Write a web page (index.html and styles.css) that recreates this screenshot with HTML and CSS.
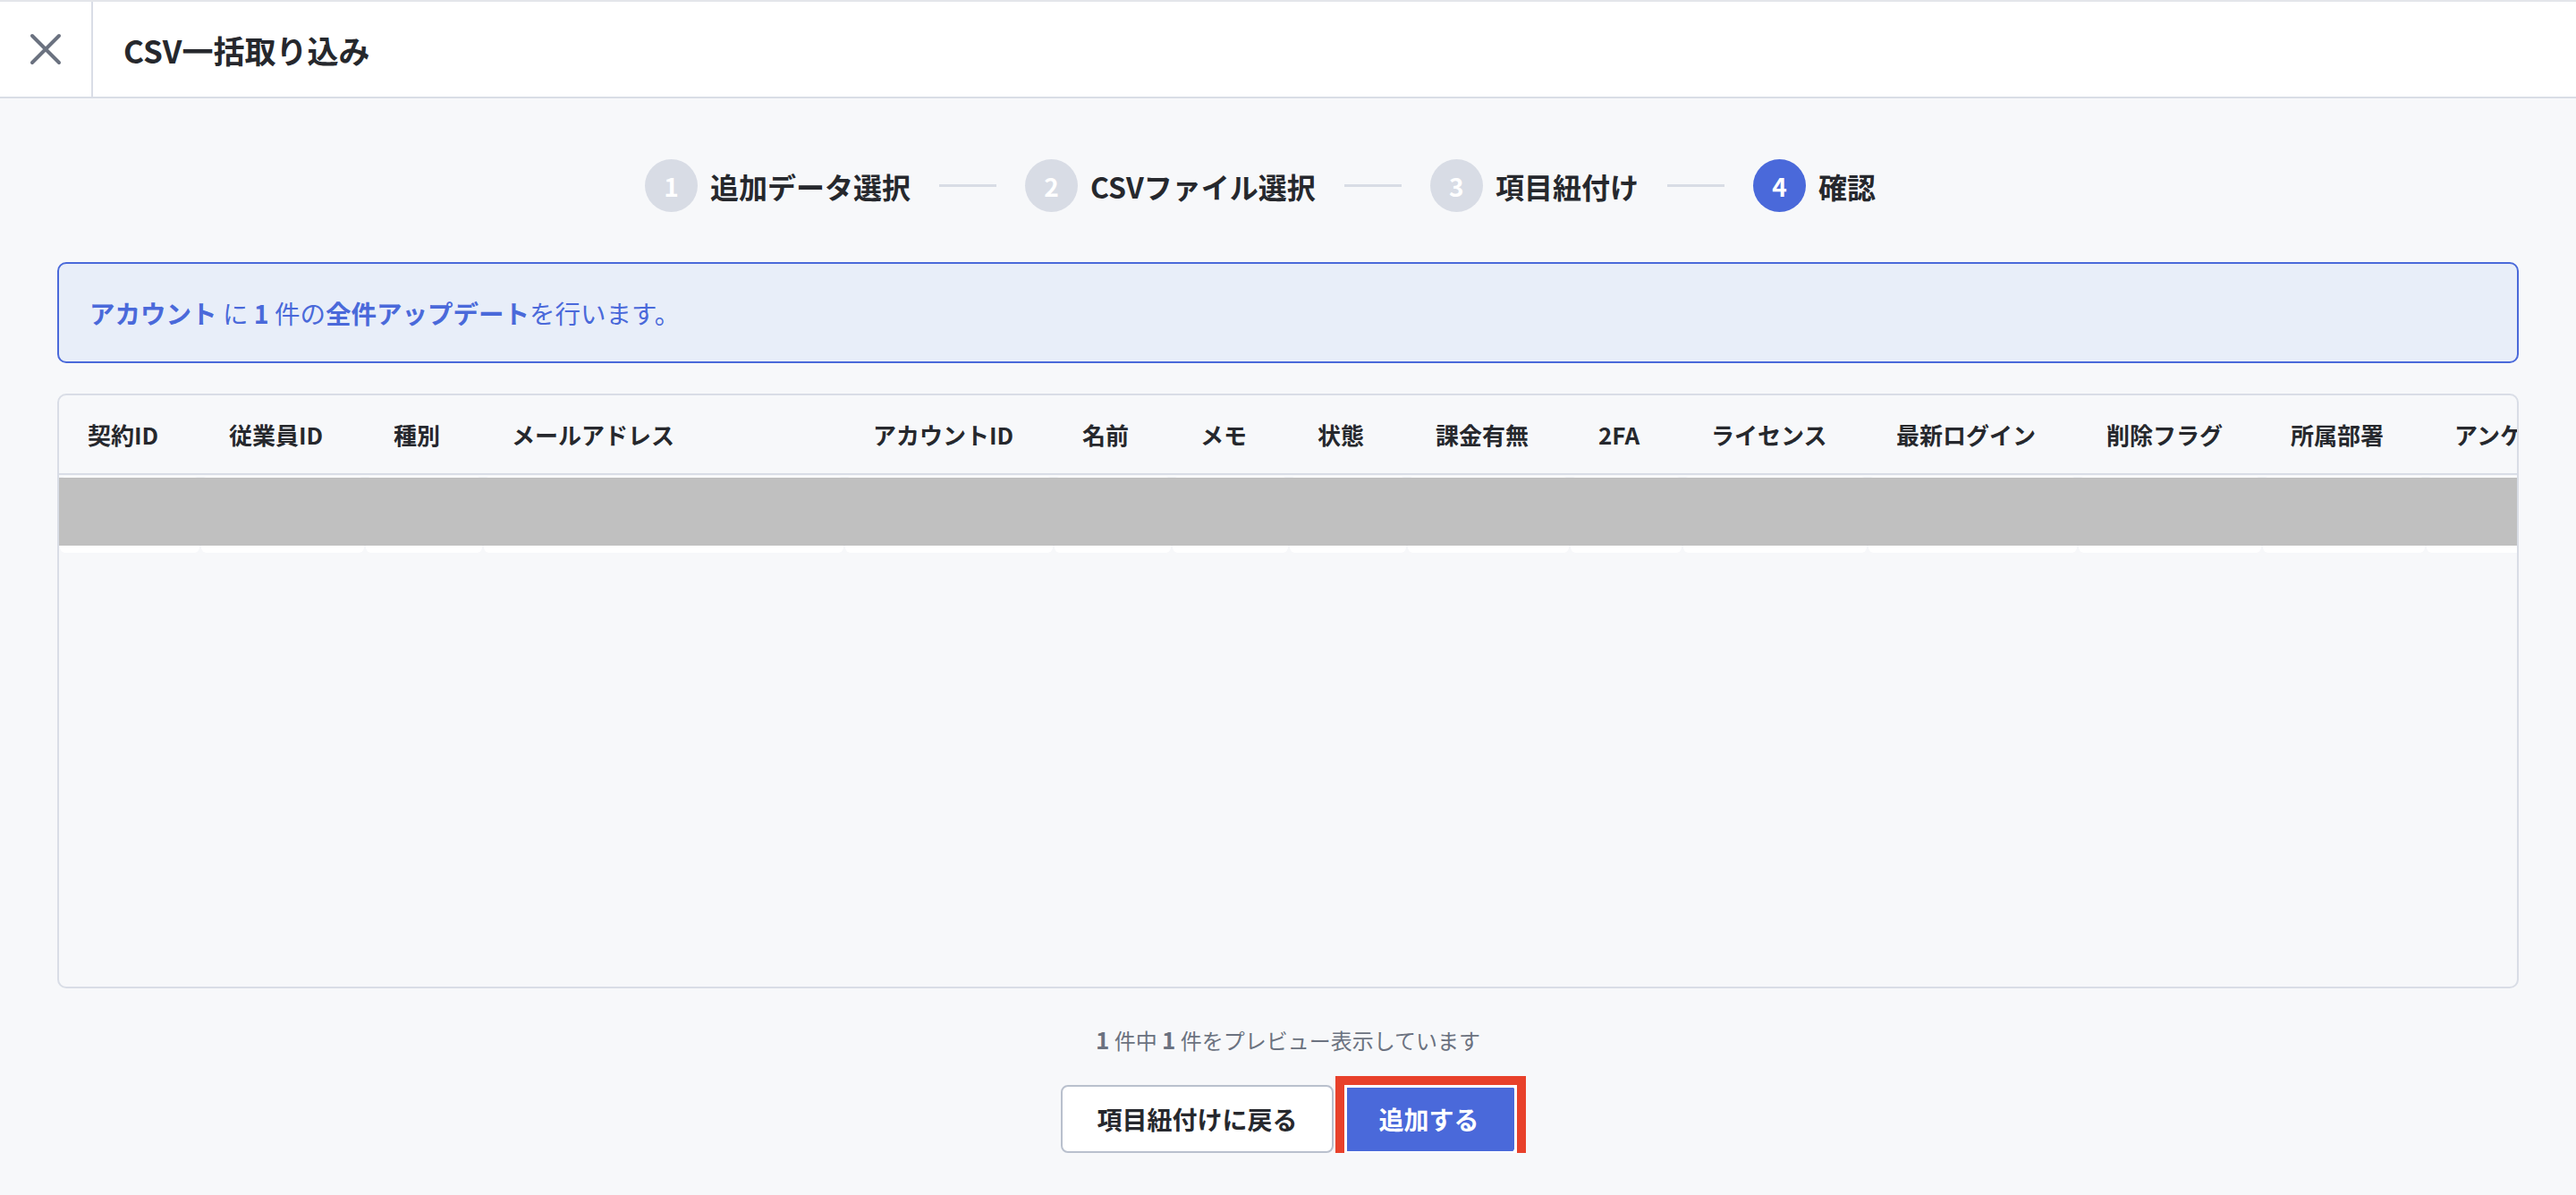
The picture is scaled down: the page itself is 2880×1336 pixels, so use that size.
FILE: index.html
```html
<!DOCTYPE html>
<html lang="ja">
<head>
  <meta charset="UTF-8" />
  <meta name="viewport" content="width=device-width, initial-scale=1.0"/>
  <title>CSV一括取り込み</title>
  <link rel="stylesheet" href="styles.css">
</head>
<body>
<header class="topbar">
  <button class="close-btn" aria-label="閉じる">
    <svg width="36" height="36" viewBox="0 0 36 36">
      <path d="M3 3 L33 33 M33 3 L3 33" stroke="#6b7280" stroke-width="4" stroke-linecap="round" fill="none"/>
    </svg>
  </button>
  <h1 class="title">CSV一括取り込み</h1>
</header>

<main class="content">
  <ol class="steps">
    <li class="step"><span class="step-num">1</span><span class="step-label">追加データ選択</span></li>
    <li class="step-line"></li>
    <li class="step"><span class="step-num">2</span><span class="step-label">CSVファイル選択</span></li>
    <li class="step-line"></li>
    <li class="step"><span class="step-num">3</span><span class="step-label">項目紐付け</span></li>
    <li class="step-line"></li>
    <li class="step active"><span class="step-num">4</span><span class="step-label">確認</span></li>
  </ol>

  <div class="info-box">
    <strong>アカウント</strong> に <strong>1</strong> 件の<strong>全件アップデート</strong>を行います。
  </div>

  <div class="preview">
    <div class="preview-inner">
      <div class="grid-row head-row">
        <div class="cell">契約ID</div>
        <div class="cell">従業員ID</div>
        <div class="cell">種別</div>
        <div class="cell">メールアドレス</div>
        <div class="cell">アカウントID</div>
        <div class="cell">名前</div>
        <div class="cell">メモ</div>
        <div class="cell">状態</div>
        <div class="cell">課金有無</div>
        <div class="cell">2FA</div>
        <div class="cell">ライセンス</div>
        <div class="cell">最新ログイン</div>
        <div class="cell">削除フラグ</div>
        <div class="cell">所属部署</div>
        <div class="cell">アンケート回答</div>
      </div>
      <div class="grid-row body-row">
        <div class="cell"></div>
        <div class="cell"></div>
        <div class="cell"></div>
        <div class="cell"></div>
        <div class="cell"></div>
        <div class="cell"></div>
        <div class="cell"></div>
        <div class="cell"></div>
        <div class="cell"></div>
        <div class="cell"></div>
        <div class="cell"></div>
        <div class="cell"></div>
        <div class="cell"></div>
        <div class="cell"></div>
        <div class="cell"></div>
      </div>
    </div>
    <div class="row-highlight"></div>
  </div>

  <p class="preview-count"><b>1</b> 件中 <b>1</b> 件をプレビュー表示しています</p>

  <div class="actions">
    <button class="btn btn-secondary">項目紐付けに戻る</button>
    <button class="btn btn-primary marked">追加する</button>
  </div>
</main>
</body>
</html>
```

FILE: styles.css
```css
body {
  font-family: "Noto Sans CJK JP", "Noto Sans", sans-serif;
  background-color: #f7f8fa;
  color: #26282d;
  margin: 0;
  padding: 0;
}
button {
  font-family: inherit;
  cursor: pointer;
}
.topbar {
  display: flex;
  align-items: center;
  height: 106px;
  background-color: #fff;
  border-top: 2px solid #e3e5ea;
  border-bottom: 2px solid #d9dde6;
}
.close-btn {
  width: 104px;
  height: 100%;
  padding: 0;
  border: none;
  border-right: 2px solid #d9dde6;
  background: none;
  display: flex;
  align-items: center;
  justify-content: center;
}
.title {
  margin: 0 0 0 34px;
  font-size: 35px;
  font-weight: bold;
}
.content {
  padding: 0 64px;
}
.steps {
  list-style: none;
  margin: 0;
  padding: 68px 62px 56px 0;
  display: flex;
  align-items: center;
  justify-content: center;
}
.step {
  display: flex;
  align-items: center;
  gap: 14px;
}
.step-num {
  width: 59px;
  height: 59px;
  border-radius: 50%;
  background-color: #d8dce5;
  color: #fff;
  font-size: 28px;
  font-weight: bold;
  display: flex;
  align-items: center;
  justify-content: center;
}
.step.active .step-num {
  background-color: #4a69da;
}
.step-label {
  font-size: 32px;
  font-weight: bold;
}
.step-line {
  width: 64px;
  height: 3px;
  margin: 0 32px;
  background-color: #d8dce5;
}
.info-box {
  padding: 34px 34px;
  line-height: 41px;
  font-size: 28.5px;
  color: #4a69da;
  background-color: #e8eef9;
  border: 2px solid #4a69da;
  border-radius: 10px;
}
.info-box strong {
  font-weight: bold;
}
.preview {
  position: relative;
  margin-top: 34px;
  height: 661px;
  border: 2px solid #d9dde6;
  border-radius: 10px;
  overflow: hidden;
}
.preview-inner {
  width: max-content;
  padding-left: 1px;
}
.grid-row {
  display: grid;
  grid-template-columns: 156px 182px 130px 402px 232px 130px 129px 130px 180px 124px 205px 233px 204px 181px 220px;
  column-gap: 2px;
}
.head-row {
  height: 87px;
  align-items: center;
  border-bottom: 2px solid #d9dde6;
  margin-left: -1px;
  padding-left: 1px;
}
.head-row .cell {
  padding-left: 31px;
  font-size: 26px;
  font-weight: bold;
  white-space: nowrap;
}
.body-row {
  height: 85px;
  margin-top: 2px;
}
.body-row .cell {
  background-color: #fff;
  border-radius: 6px;
}
.row-highlight {
  position: absolute;
  top: 92px;
  left: 0;
  right: 0;
  height: 76px;
  background-color: #c0c0c0;
}
.preview-count {
  margin: 39px 0 0;
  text-align: center;
  font-size: 24px;
  line-height: 36px;
  color: #6b7280;
}
.preview-count b {
  font-size: 26px;
}
.actions {
  margin-top: 32px;
  display: flex;
  justify-content: center;
  gap: 11px;
}
.btn {
  height: 76px;
  padding: 0 38px;
  font-size: 28px;
  font-weight: bold;
  border-radius: 8px;
}
.btn-secondary {
  background-color: #fff;
  color: #26282d;
  border: 2px solid #b9c0cd;
}
.btn-primary {
  background-color: #4a69da;
  color: #fff;
  border: 2px solid #4a69da;
}
.marked {
  position: relative;
}
.marked::after {
  content: "";
  position: absolute;
  inset: -12px -14px -13px -11px;
  border: 10px solid #e8412b;
  box-shadow: inset 0 0 0 3px #fff;
  pointer-events: none;
}
```
